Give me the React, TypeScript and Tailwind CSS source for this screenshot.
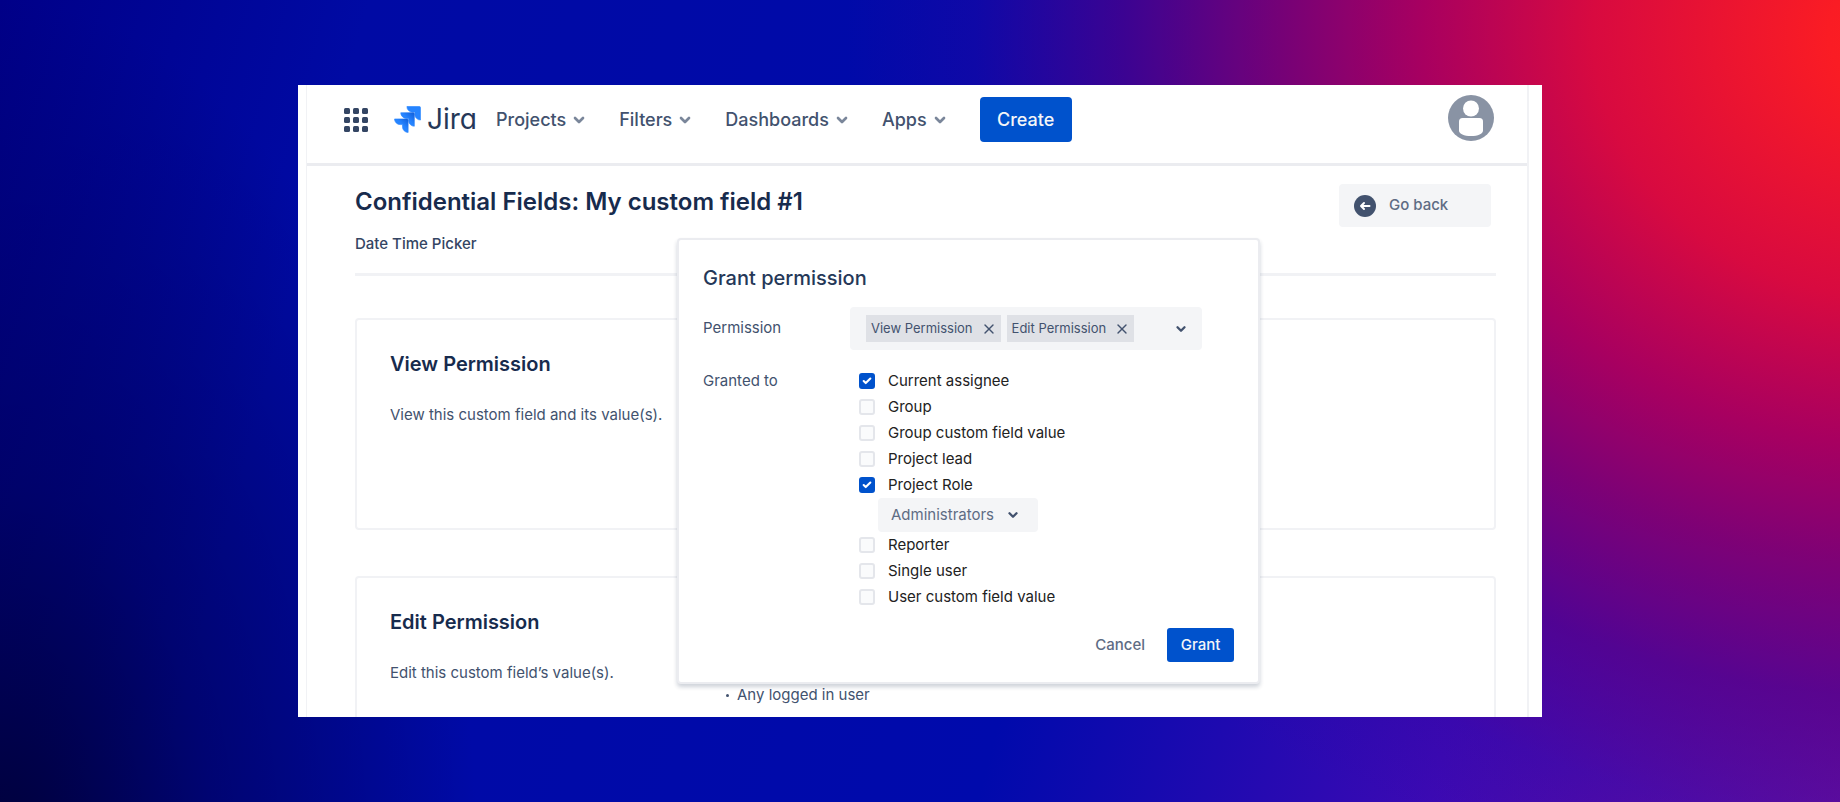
import { Check, ChevronDown, X } from "lucide-react";
import React, { useState } from "react";

const NAV_ITEMS = ["Projects", "Filters", "Dashboards", "Apps"];

const GRANTEES = [
  "Current assignee",
  "Group",
  "Group custom field value",
  "Project lead",
  "Project Role",
  "Reporter",
  "Single user",
  "User custom field value",
];

const ROLES = ["Administrators", "Developers", "Users"];

const AppSwitcherIcon = () => (
  <svg viewBox="0 0 24 24" className="size-6" fill="#344563">
    {[0, 9, 18].map((y) =>
      [0, 9, 18].map((x) => <rect key={`${x}-${y}`} x={x} y={y} width="6" height="6" rx="1.5" />)
    )}
  </svg>
);

const JiraMark = () => (
  <svg viewBox="-0.5 -0.5 25 25" className="size-[27px]">
    <defs>
      <linearGradient id="jira-mid" x1="18" y1="6" x2="10" y2="14" gradientUnits="userSpaceOnUse">
        <stop offset="0" stopColor="#0f5fdc" />
        <stop offset="0.7" stopColor="#2684ff" />
      </linearGradient>
      <linearGradient id="jira-low" x1="12.5" y1="11.5" x2="5" y2="19" gradientUnits="userSpaceOnUse">
        <stop offset="0" stopColor="#0f5fdc" />
        <stop offset="0.7" stopColor="#2684ff" />
      </linearGradient>
    </defs>
    <path
      fill="#2684ff"
      stroke="#2684ff"
      strokeWidth="0.6"
      d="M23.013 0H11.455a5.215 5.215 0 0 0 5.215 5.215h2.129v2.057A5.215 5.215 0 0 0 24 12.483V1.005A1.001 1.001 0 0 0 23.013 0z"
    />
    <path
      fill="url(#jira-mid)"
      stroke="url(#jira-mid)"
      strokeWidth="0.6"
      d="M17.294 5.757H5.736a5.215 5.215 0 0 0 5.215 5.214h2.129v2.058a5.218 5.218 0 0 0 5.215 5.214V6.758a1.001 1.001 0 0 0-1.001-1.001z"
    />
    <path
      fill="url(#jira-low)"
      stroke="url(#jira-low)"
      strokeWidth="0.6"
      d="M11.571 11.513H0a5.218 5.218 0 0 0 5.232 5.215h2.13v2.057A5.215 5.215 0 0 0 12.575 24V12.518a1.005 1.005 0 0 0-1.005-1.005z"
    />
  </svg>
);

const AvatarIcon = () => (
  <svg viewBox="0 0 46 46" className="size-[46px]">
    <circle cx="23" cy="23" r="23" fill="#8993a4" />
    <circle cx="23" cy="13.5" r="8" fill="#fff" />
    <path
      fill="#fff"
      d="M14.500 23h17a3.500 3.500 0 0 1 3.500 3.500V35.500c0 3.500-5 5.500-12 5.500s-12-2-12-5.500v-9a3.500 3.500 0 0 1 3.500-3.500z"
    />
  </svg>
);

const BackIcon = () => (
  <svg viewBox="0 0 22 22" className="size-[22px]">
    <circle cx="11" cy="11" r="11" fill="#42526e" />
    <path
      d="M15.500 11H7M10 8L7 11l3 3"
      fill="none"
      stroke="#fff"
      strokeWidth="2"
      strokeLinecap="round"
      strokeLinejoin="round"
    />
  </svg>
);

const Header = () => (
  <header className="flex h-[81px] shrink-0 items-start border-b-[3px] border-[#ebecf0] pr-[33px] pl-[37px]">
    <button aria-label="Switch apps" className="mt-[23px]">
      <AppSwitcherIcon />
    </button>
    <a href="#home" className="mt-4 ml-[26px] flex h-9 items-center gap-[6px]">
      <JiraMark />
      <span className="text-[28px] leading-9 text-[#253858] [font-feature-settings:'cv11']">Jira</span>
    </a>
    <nav className="mt-3 ml-[19px] flex h-[45px] items-center gap-8">
      {NAV_ITEMS.map((item) => (
        <button key={item} className="flex items-center gap-[5px] text-lg font-medium text-[#42526e]">
          {item}
          <ChevronDown className="size-4 text-[#7a869a]" strokeWidth={4} />
        </button>
      ))}
    </nav>
    <button className="mt-3 ml-8 h-[45px] w-[92px] rounded bg-[#0052cc] text-lg font-medium text-[#f4f5f7]">
      Create
    </button>
    <button aria-label="Your profile" className="mt-[10px] ml-auto">
      <AvatarIcon />
    </button>
  </header>
);

interface PermissionCardProps {
  title: string;
  description: string;
  children?: React.ReactNode;
}

const PermissionCard: React.FC<PermissionCardProps> = ({ title, description, children }) => (
  <section className="grid h-[212px] shrink-0 grid-cols-[336px_1fr] rounded border-2 border-[#f1f2f5] px-[33px] pt-7">
    <div>
      <h2 className="text-xl leading-8 font-semibold text-[#172b4d]">{title}</h2>
      <p className="mt-[25px] text-[15px] leading-5 whitespace-nowrap text-[#42526e]">{description}</p>
    </div>
    {children}
  </section>
);

interface TagProps {
  label: string;
}

const Tag: React.FC<TagProps> = ({ label }) => (
  <span className="flex h-[27px] items-center gap-2 bg-[#dfe1e6] pr-1 pl-[5px] text-[13px] text-[#42526e]">
    {label}
    <button aria-label={`Remove ${label}`}>
      <X className="size-4" strokeWidth={2} />
    </button>
  </span>
);

const GrantDialog = () => {
  const [checked, setChecked] = useState<string[]>(["Current assignee", "Project Role"]);

  const toggle = (name: string) => {
    setChecked((prev) => (prev.includes(name) ? prev.filter((n) => n !== name) : [...prev, name]));
  };

  return (
    <div
      role="dialog"
      aria-labelledby="grant-title"
      className="absolute top-[153px] left-[379px] w-[583px] rounded border-2 border-[#ebecf0] bg-white px-6 pt-[22px] pb-5 shadow-[0_3px_4px_rgba(9,30,66,0.2)]"
    >
      <h2 id="grant-title" className="text-xl leading-8 font-medium text-[#253858]">
        Grant permission
      </h2>

      <div className="mt-[13px] flex items-center">
        <span className="w-[147px] text-[15px] text-[#42526e]">Permission</span>
        <div className="flex h-[43px] w-[352px] items-center gap-[6px] rounded bg-[#f4f5f7] pr-[14px] pl-4">
          <Tag label="View Permission" />
          <Tag label="Edit Permission" />
          <button aria-label="Show permissions" className="ml-auto">
            <ChevronDown className="size-[14px] text-[#42526e]" strokeWidth={4} />
          </button>
        </div>
      </div>

      <fieldset className="mt-[18px] flex">
        <legend className="float-left w-[156px] text-[15px] leading-[26px] text-[#42526e]">Granted to</legend>
        <div>
          {GRANTEES.map((name) => (
            <React.Fragment key={name}>
              <label className="flex h-[26px] items-center gap-[13px] text-[15px] text-[#222]">
                <span className="relative flex size-4">
                  <input
                    type="checkbox"
                    checked={checked.includes(name)}
                    onChange={() => toggle(name)}
                    className="size-4 appearance-none rounded-[3px] border-2 border-[#e4e6eb] bg-[#fafbfc] checked:border-[#0052cc] checked:bg-[#0052cc]"
                  />
                  {checked.includes(name) && (
                    <Check className="pointer-events-none absolute inset-[3px] size-[10px] text-white" strokeWidth={5} />
                  )}
                </span>
                {name}
              </label>
              {name === "Project Role" && (
                <div className="relative ml-[19px] w-40">
                  <select
                    aria-label="Project role"
                    className="block h-[34px] w-full appearance-none rounded bg-[#f4f5f7] px-[13px] text-[15px] text-[#5e6c84]"
                  >
                    {ROLES.map((role) => (
                      <option key={role}>{role}</option>
                    ))}
                  </select>
                  <ChevronDown
                    className="pointer-events-none absolute top-[10px] right-[18px] size-[14px] text-[#42526e]"
                    strokeWidth={4}
                  />
                </div>
              )}
            </React.Fragment>
          ))}
        </div>
      </fieldset>

      <div className="mt-[18px] flex items-center justify-end gap-[22px]">
        <button className="text-[15px] font-medium text-[#5e6c84]">Cancel</button>
        <button className="h-[34px] w-[67px] rounded-[3px] bg-[#0052cc] text-[15px] font-medium text-[#f4f5f7]">
          Grant
        </button>
      </div>
    </div>
  );
};

export default function App() {
  return (
    <div className="h-screen bg-[radial-gradient(ellipse_58%_112%_at_104%_4%,#ff2020_0%,#fa1c24_8%,#d80a40_30%,#a80060_46%,rgba(130,0,112,0.9)_59%,rgba(85,0,135,0.7)_74%,rgba(50,5,160,0.3)_88%,rgba(20,6,170,0)_100%),radial-gradient(ellipse_26%_110%_at_0%_110%,#000036_0%,rgba(0,0,80,0.6)_45%,rgba(0,10,170,0)_100%),linear-gradient(105deg,#000088_0%,#000aa4_18%,#000aac_58%,#3c0ab4_80%,#6a10a0_100%)] py-[85px] font-[Inter,sans-serif]">
      <main className="relative mx-auto h-full max-w-[1244px] overflow-hidden bg-white pr-[13px] pl-2">
        <div className="flex h-full flex-col border-r-2 border-l border-[#f1f2f5]">
          <Header />
          <div className="flex flex-col pr-[31px] pl-12">
            <div className="flex items-start justify-between border-b-[3px] border-[#f1f2f5] pt-[18px] pb-[19px]">
              <div>
                <h1 className="text-2xl leading-9 font-semibold text-[#172b4d]">
                  Confidential Fields: My custom field #1
                </h1>
                <p className="mt-[14px] text-[15px] leading-5 font-medium text-[#344563]">Date Time Picker</p>
              </div>
              <button className="mr-[5px] flex h-[43px] w-[152px] items-center gap-[13px] rounded bg-[#f4f5f7] pl-[15px] text-[15px] font-medium text-[#5e6c84]">
                <BackIcon />
                Go back
              </button>
            </div>
            <div className="mt-[42px] flex flex-col gap-[46px]">
              <PermissionCard title="View Permission" description="View this custom field and its value(s)." />
              <PermissionCard title="Edit Permission" description="Edit this custom field’s value(s).">
                <ul className="mt-[79px] flex flex-col text-[15px] leading-5 text-[#42526e]">
                  <li className="flex items-center gap-2">
                    <span className="size-[3px] rounded-full bg-[#42526e]" />
                    Any logged in user
                  </li>
                </ul>
              </PermissionCard>
            </div>
          </div>
        </div>
        <GrantDialog />
      </main>
    </div>
  );
}
